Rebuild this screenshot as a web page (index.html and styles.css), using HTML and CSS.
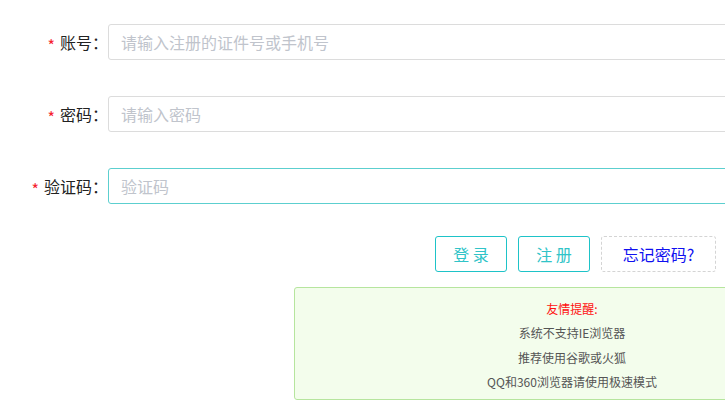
FILE: index.html
```html
<!DOCTYPE html>
<html lang="zh-CN">
<head>
<meta charset="utf-8">
<link rel="stylesheet" href="styles.css">
</head>
<body>
<div class="page">
  <form class="login-form">
    <div class="form-item">
      <label class="form-label"><span class="req">*</span>账号：</label>
      <div class="form-control"><input class="input" type="text" placeholder="请输入注册的证件号或手机号"></div>
    </div>
    <div class="form-item">
      <label class="form-label"><span class="req">*</span>密码：</label>
      <div class="form-control"><input class="input" type="password" placeholder="请输入密码"></div>
    </div>
    <div class="form-item">
      <label class="form-label"><span class="req">*</span>验证码：</label>
      <div class="form-control"><input class="input input-active" type="text" placeholder="验证码"></div>
    </div>
    <div class="actions">
      <button type="button" class="btn btn-primary">登 录</button>
      <button type="button" class="btn btn-primary">注 册</button>
      <button type="button" class="btn btn-link">忘记密码?</button>
    </div>
  </form>
  <div class="notice">
    <p class="notice-title">友情提醒:</p>
    <p class="notice-line">系统不支持IE浏览器</p>
    <p class="notice-line">推荐使用谷歌或火狐</p>
    <p class="notice-line">QQ和360浏览器请使用极速模式</p>
  </div>
</div>
</body>
</html>
```

FILE: styles.css
```css
html, body {
  margin: 0;
  padding: 0;
  overflow: hidden;
  background: #fff;
}
body {
  font-family: "Noto Sans CJK SC", "Noto Sans", sans-serif;
  color: #333;
}
.page {
  width: 900px;
  padding-top: 24px;
}
.login-form {
  display: flex;
  flex-direction: column;
  gap: 36px;
}
.form-item {
  display: flex;
  align-items: center;
}
.form-label {
  width: 108px;
  box-sizing: border-box;
  padding-right: 0;
  text-align: right;
  font-size: 16px;
  line-height: 36px;
  color: #222;
  white-space: nowrap;
}
.req {
  display: inline-block;
  color: #f5222d;
  margin-right: 5px;
  font-size: 16px;
  transform: translateY(3px);
}
.form-control {
  flex: 1;
}
.input {
  display: block;
  box-sizing: border-box;
  width: 100%;
  height: 36px;
  padding: 0 12px;
  border: 1px solid #dcdcdc;
  border-radius: 3px;
  font-family: inherit;
  font-size: 16px;
  color: #333;
  outline: none;
  background: #fff;
}
.input::placeholder {
  color: #c0c4cc;
}
.input-active {
  border-color: #5ccfcf;
}
.actions {
  display: flex;
  gap: 11px;
  padding-left: 435px;
  margin-top: -4px;
}
.btn {
  box-sizing: border-box;
  height: 36px;
  padding: 0;
  font-family: inherit;
  font-size: 16px;
  line-height: 34px;
  background: #fff;
  border-radius: 3px;
  cursor: pointer;
}
.btn-primary {
  width: 72px;
  border: 1px solid #1ec3c8;
  color: #30c4c8;
}
.btn-link {
  width: 115px;
  border: 1px dashed #d4d4d4;
  color: #1010f0;
}
.notice {
  margin: 15px 0 0 294px;
  width: 556px;
  box-sizing: border-box;
  border: 1px solid #b6e59e;
  border-radius: 3px;
  background: #f3fdec;
  padding: 9px 0 4px;
  text-align: center;
  font-size: 12px;
  line-height: 24.4px;
  color: #555;
}
.notice p {
  margin: 0;
}
.notice-title {
  color: #ff1010;
}
```
